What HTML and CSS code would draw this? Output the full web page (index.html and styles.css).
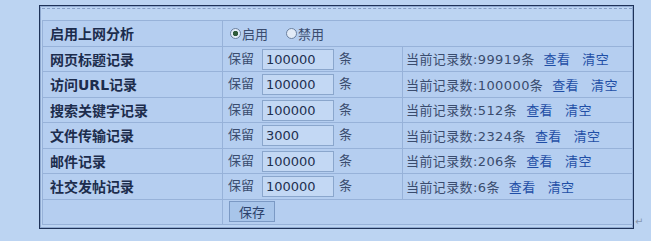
FILE: index.html
```html
<!DOCTYPE html>
<html lang="zh-CN">
<head>
<meta charset="utf-8">
<title>上网分析设置</title>
<link rel="stylesheet" href="styles.css">
</head>
<body>
<div class="page">
  <div class="frame">
    <div class="dash"></div>
    <table class="grid">
      <colgroup>
        <col class="c1">
        <col class="c2">
        <col class="c3">
      </colgroup>
      <tr>
        <th>启用上网分析</th>
        <td class="keep" colspan="2"><label class="opt"><input type="radio" name="en" checked><span>启用</span></label><label class="opt opt2"><input type="radio" name="en"><span>禁用</span></label></td>
      </tr>
      <tr>
        <th>网页标题记录</th>
        <td class="keep">保留<input class="num" type="text" value="100000">条</td>
        <td class="stat">当前记录数:99919条<a class="lk">查看</a><a class="lk lk2">清空</a></td>
      </tr>
      <tr>
        <th>访问URL记录</th>
        <td class="keep">保留<input class="num" type="text" value="100000">条</td>
        <td class="stat">当前记录数:100000条<a class="lk">查看</a><a class="lk lk2">清空</a></td>
      </tr>
      <tr>
        <th>搜索关键字记录</th>
        <td class="keep">保留<input class="num" type="text" value="100000">条</td>
        <td class="stat">当前记录数:512条<a class="lk">查看</a><a class="lk lk2">清空</a></td>
      </tr>
      <tr>
        <th>文件传输记录</th>
        <td class="keep">保留<input class="num" type="text" value="3000">条</td>
        <td class="stat">当前记录数:2324条<a class="lk">查看</a><a class="lk lk2">清空</a></td>
      </tr>
      <tr>
        <th>邮件记录</th>
        <td class="keep">保留<input class="num" type="text" value="100000">条</td>
        <td class="stat">当前记录数:206条<a class="lk">查看</a><a class="lk lk2">清空</a></td>
      </tr>
      <tr>
        <th>社交发帖记录</th>
        <td class="keep">保留<input class="num" type="text" value="100000">条</td>
        <td class="stat">当前记录数:6条<a class="lk">查看</a><a class="lk lk2">清空</a></td>
      </tr>
      <tr>
        <th></th>
        <td class="keep" colspan="2"><button class="save" type="button">保存</button></td>
      </tr>
    </table>
  </div>
  <span class="ret">↵</span>
</div>
</body>
</html>
```
FILE: styles.css
```css
html, body {
  margin: 0;
  background: #bcd4f2;
}
body {
  font-family: "DejaVu Sans", "Noto Sans CJK SC", sans-serif;
  font-size: 13px;
  color: #3a4c6e;
}
.page {
  display: flex;
  align-items: flex-end;
  padding: 5px 0 0 39px;
}
.frame {
  box-sizing: border-box;
  width: 595px;
  height: 224px;
  border: 1px solid #1e3258;
  box-shadow: inset 0 0 0 1px #8fa9d0;
  padding: 2px 1px 3px 2px;
  background: #bcd4f2;
}
.dash {
  border-top: 1px dashed #86a0c8;
  margin-bottom: 11px;
}
.grid {
  border-collapse: collapse;
  width: 590px;
  height: 205px;
  table-layout: fixed;
  background: #b5cef0;
}
.c1 { width: 180px; }
.c2 { width: 180px; }
.c3 { width: 230px; }
.grid th, .grid td {
  border: 1px solid #97b2d9;
  padding: 0;
  height: 24px;
  vertical-align: middle;
  white-space: nowrap;
  overflow: hidden;
}
.grid th {
  text-align: left;
  padding-left: 7px;
  font-weight: 700;
  font-size: 14px;
  color: #1c2c4c;
}
.grid td.keep {
  padding-left: 5px;
}
.grid td.stat {
  padding-left: 3px;
  letter-spacing: 0.4px;
}
.num {
  box-sizing: border-box;
  width: 72px;
  height: 21px;
  margin: 0 5px 0 8px;
  padding: 0 3px;
  border: 1px solid #8aa6cc;
  background: #c3d8f4;
  font-family: "DejaVu Sans", sans-serif;
  font-size: 13px;
  color: #1e3050;
  vertical-align: middle;
}
.opt {
  display: inline-flex;
  align-items: center;
  margin-left: 2px;
}
.opt2 {
  margin-left: 18px;
}
.opt input {
  appearance: none;
  -webkit-appearance: none;
  box-sizing: border-box;
  width: 11px;
  height: 11px;
  margin: 0 1px 0 0;
  border: 1px solid #6b809f;
  border-radius: 50%;
  background: #e2ebf7;
}
.opt input:checked {
  background: radial-gradient(circle, #2f5a3a 0 2.4px, #e2ebf7 3px);
}
.lk {
  color: #1f4ea6;
  margin-left: 9px;
  cursor: pointer;
}
.lk2 {
  margin-left: 12px;
}
.save {
  box-sizing: border-box;
  width: 46px;
  height: 21px;
  margin-left: 1px;
  padding: 0;
  border: 1px solid #7b99c4;
  background: #a8c5ea;
  color: #2c426b;
  font-family: "Noto Sans CJK SC", sans-serif;
  font-size: 13px;
}
.ret {
  font-size: 10px;
  line-height: 10px;
  color: #8797b0;
  margin: 0 0 2px 1px;
}
```
